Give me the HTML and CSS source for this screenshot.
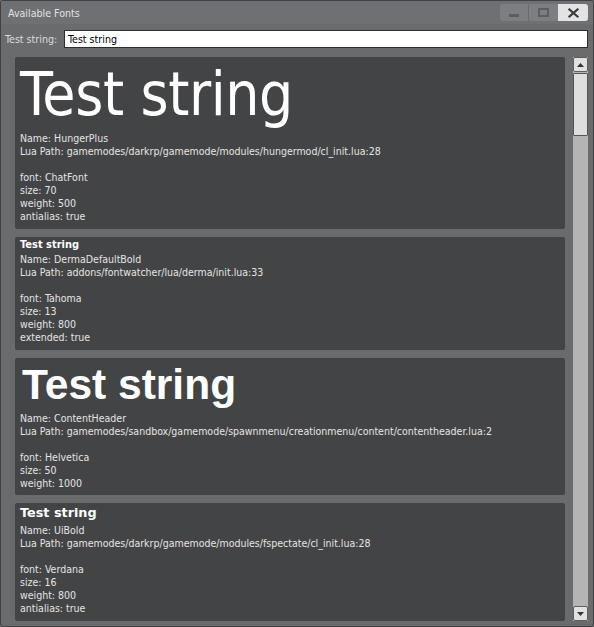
FILE: index.html
```html
<!DOCTYPE html>
<html>
<head>
<meta charset="utf-8">
<link rel="stylesheet" href="styles.css">
</head>
<body>
<div class="window">
  <div class="titlebar">
    <span class="title">Available Fonts</span>
    <div class="controls">
      <div class="btn btn-min"><span class="min-bar"></span></div>
      <div class="btn btn-max"><span class="max-box"></span></div>
      <div class="btn btn-close">
        <svg width="11" height="10" viewBox="0 0 11 10"><path d="M1.5 1.5 L9.5 8.5 M9.5 1.5 L1.5 8.5" stroke="#3a3c3e" stroke-width="2.2" stroke-linecap="square"/></svg>
      </div>
    </div>
  </div>
  <div class="testrow">
    <span class="label">Test string:</span>
    <div class="input">Test string</div>
  </div>
  <div class="scrollarea">
    <div class="list">
      <div class="card">
        <div class="sample s-hunger">Test string</div>
        <div class="info">Name: HungerPlus<br>Lua Path: gamemodes/darkrp/gamemode/modules/hungermod/cl_init.lua:28<br><br>font: ChatFont<br>size: 70<br>weight: 500<br>antialias: true</div>
      </div>
      <div class="card">
        <div class="sample s-derma">Test string</div>
        <div class="info">Name: DermaDefaultBold<br>Lua Path: addons/fontwatcher/lua/derma/init.lua:33<br><br>font: Tahoma<br>size: 13<br>weight: 800<br>extended: true</div>
      </div>
      <div class="card card-tight">
        <div class="sample s-content">Test string</div>
        <div class="info">Name: ContentHeader<br>Lua Path: gamemodes/sandbox/gamemode/spawnmenu/creationmenu/content/contentheader.lua:2<br><br>font: Helvetica<br>size: 50<br>weight: 1000</div>
      </div>
      <div class="card">
        <div class="sample s-ui">Test string</div>
        <div class="info">Name: UiBold<br>Lua Path: gamemodes/darkrp/gamemode/modules/fspectate/cl_init.lua:28<br><br>font: Verdana<br>size: 16<br>weight: 800<br>antialias: true</div>
      </div>
    </div>
    <div class="scrollbar">
      <div class="sb-btn"><svg width="7" height="4" viewBox="0 0 7 4"><path d="M0 4 L3.5 0 L7 4 Z" fill="#333"/></svg></div>
      <div class="sb-track"><div class="sb-grip"></div></div>
      <div class="sb-btn"><svg width="7" height="4" viewBox="0 0 7 4"><path d="M0 0 L3.5 4 L7 0 Z" fill="#333"/></svg></div>
    </div>
  </div>
</div>
</body>
</html>
```
FILE: styles.css
```css
html, body {
  margin: 0;
  padding: 0;
  background: #6a6c6e;
}
body {
  width: 594px;
  height: 627px;
  overflow: hidden;
  font-family: "DejaVu Sans Condensed", "DejaVu Sans", sans-serif;
}
.window {
  box-sizing: border-box;
  width: 594px;
  height: 627px;
  border: 1px solid #3f4143;
  border-radius: 3px;
  background: #696b6d;
  display: flex;
  flex-direction: column;
  overflow: hidden;
}
.titlebar {
  height: 23px;
  flex: none;
  display: flex;
  align-items: center;
  padding-left: 7px;
  padding-right: 5px;
  background: #6e7073;
}
.title {
  color: #e2e2e2;
  font-size: 10.6px;
  flex: 1;
}
.controls {
  display: flex;
  align-self: flex-start;
  margin-top: 3px;
}
.btn {
  width: 29px;
  height: 17px;
  display: flex;
  align-items: center;
  justify-content: center;
  box-sizing: border-box;
}
.btn-min {
  background: #7c7e81;
  border-radius: 3px 0 0 3px;
  border-right: 1px solid #6a6c6e;
}
.btn-max {
  background: #7c7e81;
}
.btn-close {
  width: 30px;
  background: #e3e3e3;
  border-radius: 0 3px 3px 0;
}
.min-bar {
  width: 10px;
  height: 3px;
  margin-top: 5px;
  background: #5b5d60;
}
.max-box {
  width: 7px;
  height: 5px;
  border: 2px solid #5b5d60;
}
.testrow {
  flex: none;
  display: flex;
  align-items: center;
  margin-top: 6px;
  padding: 0 5px 0 4px;
  height: 18px;
}
.label {
  color: #dcdcdc;
  font-size: 10.6px;
  width: 59px;
  flex: none;
}
.input {
  flex: 1;
  height: 18px;
  box-sizing: border-box;
  background: #ffffff;
  border: 1px solid #2e2e2e;
  color: #000;
  font-size: 10.6px;
  line-height: 16px;
  padding-left: 3px;
}
.scrollarea {
  flex: 1;
  min-height: 0;
  display: flex;
  margin-top: 9px;
  padding: 0 5px 5px 14px;
}
.list {
  flex: 1;
  display: flex;
  flex-direction: column;
  gap: 8px;
  margin-right: 8px;
  overflow: hidden;
}
.card {
  flex: none;
  background: #434446;
  border-radius: 2px;
  padding: 0 5px 6px 5px;
}
.card-tight {
  padding-bottom: 5px;
}
.sample {
  color: #ffffff;
  white-space: nowrap;
}
.s-hunger {
  font-family: "DejaVu Sans Condensed", "DejaVu Sans", sans-serif;
  font-size: 60px;
  letter-spacing: -0.4px;
  line-height: 75px;
  height: 75px;
}
.s-derma {
  font-family: "DejaVu Sans Condensed", "DejaVu Sans", sans-serif;
  font-weight: bold;
  font-size: 11px;
  line-height: 13px;
  padding-top: 1px;
  margin-bottom: 2px;
}
.s-content {
  font-family: "Liberation Sans", Arial, sans-serif;
  font-weight: bold;
  font-size: 42.5px;
  line-height: 53px;
  height: 54px;
  padding-left: 2px;
}
.s-ui {
  font-family: "DejaVu Sans", sans-serif;
  font-weight: bold;
  font-size: 12.8px;
  line-height: 18px;
  padding-top: 1px;
  margin-bottom: 2px;
}
.info {
  color: #e4e4e4;
  font-size: 10.5px;
  line-height: 13px;
  white-space: nowrap;
}
.scrollbar {
  width: 15px;
  flex: none;
  display: flex;
  flex-direction: column;
  background: #b4b4b4;
}
.sb-btn {
  height: 15px;
  box-sizing: border-box;
  background: #e1e1e1;
  border: 1px solid #5e5e5e;
  border-radius: 2px;
  display: flex;
  align-items: center;
  justify-content: center;
  flex: none;
}
.sb-track {
  flex: 1;
  padding-top: 1px;
}
.sb-grip {
  height: 63px;
  box-sizing: border-box;
  background: #dedede;
  border: 1px solid #555;
  border-radius: 1px;
}
```
